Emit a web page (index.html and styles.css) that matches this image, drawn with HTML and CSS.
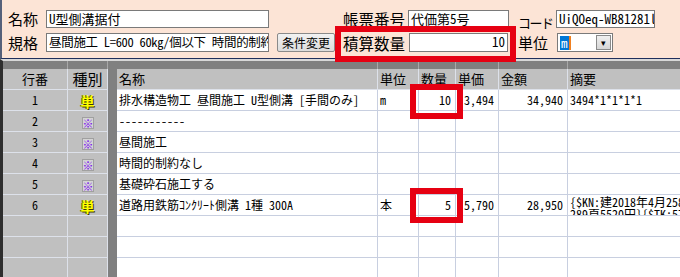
FILE: index.html
```html
<!DOCTYPE html>
<html lang="ja">
<head>
    <meta charset="UTF-8">
    <title>代価明細</title>
    <link rel="stylesheet" href="styles.css">
</head>
<body>
    <div class="panel">
        <div class="form-grid">
            <span class="lbl">名称</span>
            <div class="field f-name">U型側溝据付</div>
            <span></span>
            <span class="lbl wide-lbl">帳票番号</span>
            <div class="field f-doc">代価第5号</div>
            <span class="lbl low">コード</span>
            <div class="field f-code">UiQOeq-WB81281l</div>

            <span class="lbl">規格</span>
            <div class="field f-name f-spec">昼間施工 L=600 60kg/個以下 時間的制約:</div>
            <button class="btn">条件変更</button>
            <span class="lbl wide-lbl">積算数量</span>
            <div class="field f-qty">10</div>
            <span class="lbl">単位</span>
            <div class="select">
                <span class="sel-text">m</span><span class="caret"></span>
                <span class="drop">&#9662;</span>
            </div>
        </div>
    </div>

    <div class="grid">
        <div class="row band">
            <div class="c side"></div><div class="c side"></div><div class="c dark"></div>
            <div class="c"></div><div class="c"></div><div class="c"></div><div class="c"></div><div class="c"></div><div class="c"></div>
        </div>
        <div class="row head">
            <div class="c side center">行番</div><div class="c side center big">種別</div><div class="c dark"></div>
            <div class="c">名称</div><div class="c">単位</div><div class="c">数量</div><div class="c">単価</div><div class="c">金額</div><div class="c">摘要</div>
        </div>

        <div class="row">
            <div class="c side center">1</div><div class="c side center"><span class="ic-tan">単</span></div><div class="c dark"></div>
            <div class="c">排水構造物工&ensp;昼間施工&ensp;U型側溝&ensp;［手間のみ］</div><div class="c">m</div><div class="c num">10</div><div class="c num">3,494</div><div class="c num">34,940</div><div class="c">3494*1*1*1*1</div>
        </div>
        <div class="row">
            <div class="c side center">2</div><div class="c side center"><span class="ic-note">※</span></div><div class="c dark"></div>
            <div class="c">-----------</div><div class="c"></div><div class="c"></div><div class="c"></div><div class="c"></div><div class="c"></div>
        </div>
        <div class="row">
            <div class="c side center">3</div><div class="c side center"><span class="ic-note">※</span></div><div class="c dark"></div>
            <div class="c">昼間施工</div><div class="c"></div><div class="c"></div><div class="c"></div><div class="c"></div><div class="c"></div>
        </div>
        <div class="row">
            <div class="c side center">4</div><div class="c side center"><span class="ic-note">※</span></div><div class="c dark"></div>
            <div class="c">時間的制約なし</div><div class="c"></div><div class="c"></div><div class="c"></div><div class="c"></div><div class="c"></div>
        </div>
        <div class="row">
            <div class="c side center">5</div><div class="c side center"><span class="ic-note">※</span></div><div class="c dark"></div>
            <div class="c">基礎砕石施工する</div><div class="c"></div><div class="c"></div><div class="c"></div><div class="c"></div><div class="c"></div>
        </div>
        <div class="row">
            <div class="c side center">6</div><div class="c side center"><span class="ic-tan">単</span></div><div class="c dark"></div>
            <div class="c">道路用鉄筋ｺﾝｸﾘｰﾄ側溝&ensp;1種&ensp;300A</div><div class="c">本</div><div class="c num">5</div><div class="c num">5,790</div><div class="c num">28,950</div><div class="c memo">{$KN:建2018年4月258頁<br>289頁5520円}{$TK:57</div>
        </div>
        <div class="row">
            <div class="c side"></div><div class="c side"></div><div class="c dark"></div>
            <div class="c"></div><div class="c"></div><div class="c"></div><div class="c"></div><div class="c"></div><div class="c"></div>
        </div>
        <div class="row">
            <div class="c side"></div><div class="c side"></div><div class="c dark"></div>
            <div class="c"></div><div class="c"></div><div class="c"></div><div class="c"></div><div class="c"></div><div class="c"></div>
        </div>
        <div class="row">
            <div class="c side"></div><div class="c side"></div><div class="c dark"></div>
            <div class="c"></div><div class="c"></div><div class="c"></div><div class="c"></div><div class="c"></div><div class="c"></div>
        </div>
    </div>

    <!-- 強調枠 -->
    <div class="mark mark-qty"></div>
    <div class="mark mark-r1"></div>
    <div class="mark mark-r6"></div>
</body>
</html>
```

FILE: styles.css
```css
body {
    margin: 0;
    width: 680px;
    height: 277px;
    overflow: hidden;
    position: relative;
    font-family: "Noto Sans CJK JP", sans-serif;
    font-feature-settings: "hwid";
    color: #000;
    background: #fff;
}

.panel {
    height: 59px;
    box-sizing: border-box;
    background-color: #fce4d6;
    border-left: 2px solid #55607a;
    border-bottom: 1px solid #1f2f5c;
    padding: 10px 0 0 6px;
}

.form-grid {
    display: grid;
    grid-template-columns: 38px 231px 66px 65px 110px 38px 124px;
    grid-template-rows: 18px 19px;
    row-gap: 5px;
}

.lbl {
    font-size: 15px;
    line-height: 18px;
    white-space: nowrap;
    align-self: center;
}

.wide-lbl {
    font-size: 15.5px;
}

.low {
    align-self: end;
    margin-bottom: -4px;
    font-size: 13px;
    letter-spacing: -1.5px;
}

.field {
    box-sizing: border-box;
    background: #fff;
    border: 1px solid #7a7a7a;
    font-size: 13px;
    line-height: 16px;
    padding: 0 2px;
    white-space: nowrap;
    overflow: hidden;
}

.f-name { width: 223px; }
.f-doc { width: 101px; }
.f-code { width: 99px; }

.f-spec {
    font-size: 12.5px;
    letter-spacing: -0.3px;
}

.f-qty {
    width: 99px;
    margin-left: 1px;
    text-align: right;
}

.btn {
    width: 58px;
    height: 19px;
    padding: 0;
    font-family: inherit;
    font-size: 12px;
    line-height: 16px;
    border: 1px solid #8a8a8a;
    border-radius: 2px;
    background: linear-gradient(#f2f2f2, #dcdcdc);
    white-space: nowrap;
    overflow: hidden;
}

.select {
    width: 56px;
    margin-left: 1px;
    box-sizing: border-box;
    background: #fff;
    border: 1px solid #7a7a7a;
    display: flex;
    align-items: center;
    padding-left: 2px;
}

.sel-text {
    background: #0078d7;
    color: #fff;
    font-size: 13px;
    line-height: 14px;
    padding: 0 1px;
}

.caret {
    width: 2px;
    height: 14px;
    background: #f08020;
}

.drop {
    margin-left: auto;
    margin-right: 1px;
    width: 15px;
    height: 15px;
    box-sizing: border-box;
    border: 1px solid #8a8a8a;
    background: linear-gradient(#f0f0f0, #d6d6d6);
    font-size: 9px;
    line-height: 13px;
    text-align: center;
}

.grid {
    border-left: 3px solid #2e2e2e;
    border-top: 2px solid #d8d8d8;
}

.row {
    display: grid;
    grid-template-columns: 65px 40px 9px 261px 41px 37px 43px 69px 120px;
    height: 21px;
}

.c {
    box-sizing: border-box;
    border-right: 1px solid #c8cfe0;
    border-bottom: 1px solid #c8cfe0;
    font-size: 12px;
    line-height: 20px;
    padding: 0 2px;
    white-space: nowrap;
    overflow: hidden;
}

.side {
    background-color: #c0c0c0;
    border-color: #dde1ea;
}

.dark {
    background-color: #808080;
    border-right: none;
    border-bottom-color: #808080;
}

.center {
    text-align: center;
}

.num {
    text-align: right;
    padding-right: 4px;
}

.band {
    height: 8px;
}

.band .c {
    background-color: #808080;
    border-color: #a8a8a8;
    border-bottom: none;
}

.head .c {
    background-color: #c0c0c0;
    border-color: #dde1ea;
    font-size: 13px;
}

.head .big {
    font-size: 15px;
}

.head .dark {
    background-color: #808080;
    border-bottom-color: #808080;
}

.ic-tan {
    display: inline-block;
    font-size: 14px;
    line-height: 15px;
    font-weight: bold;
    color: #ffff00;
    text-shadow: 1px 1px 0 #3a3a00, -1px 0 0 #606000;
    vertical-align: middle;
}

.ic-note {
    display: inline-block;
    width: 12px;
    height: 12px;
    box-sizing: border-box;
    background: #d4d4d4;
    border: 1px solid #a0a0a0;
    color: #7a10f0;
    font-size: 11px;
    font-weight: bold;
    line-height: 10px;
    text-align: center;
    vertical-align: middle;
}

.memo {
    line-height: 12px;
    padding-top: 1px;
}

.mark {
    position: absolute;
    border: 6px solid #e60012;
    box-sizing: border-box;
}

.mark-qty {
    left: 335px;
    top: 26px;
    width: 181px;
    height: 36px;
}

.mark-r1 {
    left: 410px;
    top: 84px;
    width: 53px;
    height: 35px;
}

.mark-r6 {
    left: 410px;
    top: 188px;
    width: 53px;
    height: 35px;
}
```
